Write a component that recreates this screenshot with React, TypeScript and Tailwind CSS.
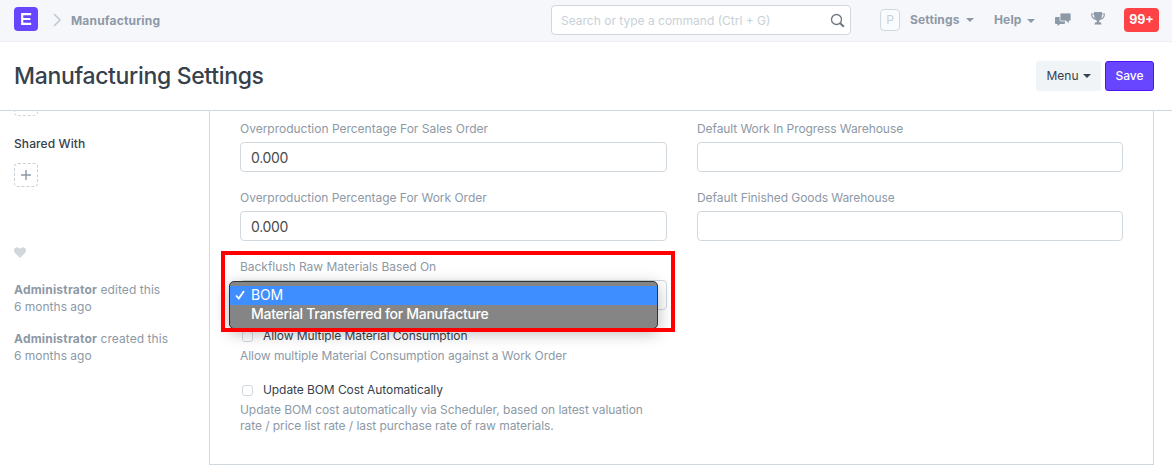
import React from "react";

const label = "text-xs leading-4 text-[#8d99a6] whitespace-nowrap";

function Caret({ className = "" }: { className?: string }) {
  return <span className={`block size-0 border-x-4 border-t-4 border-x-transparent ${className}`} />;
}

function Field({ title, value, spacing }: { title: string; value?: string; spacing: string }) {
  return (
    <div className="h-[69px]">
      <div className={`${label} ${spacing} flex h-[21px] items-start`}>{title}</div>
      <div className="flex h-[30px] items-center rounded-[4px] border border-[#d1d8dd] bg-white px-2.5 text-[14px] tracking-[-0.3px] text-[#4b4b4b]">{value}</div>
    </div>
  );
}

function Check({ title, spacing }: { title: string; spacing: string }) {
  return (
    <div className="flex h-4 items-center">
      <span className="ml-[2px] mt-px size-[11px] rounded-[3px] border border-[#d1d8dd] bg-white" />
      <span className={`ml-[10px] text-xs leading-4 whitespace-nowrap text-[#36414c] ${spacing}`}>{title}</span>
    </div>
  );
}

function Author({ action }: { action: string }) {
  return (
    <div className="h-[49px] text-xs leading-[17px] whitespace-nowrap text-[#8d99a6]">
      <div className="tracking-[0.06px]"><b className="font-bold tracking-[0.2px]">Administrator</b> {action} this</div>
      <div>6 months ago</div>
    </div>
  );
}

export default function App() {
  return (
    <div className="flex h-[475px] w-[1172px] flex-col overflow-hidden bg-white font-['Inter','Liberation_Sans',sans-serif]">
      <header className="flex h-[42px] shrink-0 items-center border-b border-[#ebeff2] bg-[#f5f7fa] pb-px text-xs font-bold text-[#8d99a6]">
        <div className="ml-[14px] flex size-6 -translate-y-px items-center justify-center rounded-[4px] bg-[#6846ff]">
          <svg width="12" height="12" viewBox="0 0 12 12" fill="none" stroke="#fff" strokeWidth="2.2"><path d="M11.200 1.200H2.200v9.600h9M2.200 6h8.200" /></svg>
        </div>
        <svg className="ml-[15px]" width="9" height="14" viewBox="0 0 9 14" fill="none" stroke="#c0cad3" strokeWidth="1.6"><path d="m1 1 6 6-6 6" /></svg>
        <span className="ml-[9px] w-[480px] tracking-[0.18px]"><span className="relative top-px">Manufacturing</span></span>
        <div className="flex h-[30px] w-[300px] shrink-0 items-center justify-between rounded-[4px] border border-[#d1d8dd] bg-white pl-[9px] pr-[5px] font-normal text-[#c8d1d8]">
          <span className="relative top-px">Search or type a command (Ctrl + G)</span>
          <svg width="15" height="15" viewBox="0 0 15 15" fill="none" stroke="#6c7680"><circle cx="6.500" cy="6.500" r="5" strokeWidth="1.3" /><path d="m10.200 10.200 3.600 3.600" strokeWidth="2" /></svg>
        </div>
        <div className="ml-[29px] flex h-[22px] w-5 items-center justify-center rounded-[4px] border border-[#d1d8dd] bg-[#fafbfc] font-normal text-[#c8d1d8]">P</div>
        <span className="ml-[10px] w-[51px] tracking-[0.15px]">Settings</span><Caret className="ml-[5px] border-t-[#8d99a6]" />
        <span className="ml-[20px] w-[28px] tracking-[0.15px]">Help</span><Caret className="ml-[5px] mt-px border-t-[#8d99a6]" />
        <svg className="ml-[20px] -mt-0.5" width="16" height="13" viewBox="0 0 16 13"><path fill="#8d99a6" d="M1 4h8q1 0 1 1v5q0 1-1 1H5l-2.500 2.200V11H1q-1 0-1-1V5q0-1 1-1Z" /><path fill="#8d99a6" stroke="#f5f7fa" strokeWidth="0.8" d="M6 0h9q1 0 1 1v6q0 1-1 1h-1v3l-3-3H6Q5 8 5 7V1q0-1 1-1Z" /></svg>
        <svg className="ml-[20px] -mt-1" width="14" height="13" viewBox="0 0 14 13" fill="#8d99a6"><path d="M3 0h8v1.500h3Q14 7 9 8q-1 .6-1 2 2.500 0 2.500 2v.5h-7V12q0-2 2.500-2 0-1.400-1-2Q0 7 0 1.500h3Zm0 2.500H1q.4 2.800 2.800 3.900Q3 4.500 3 2.500Zm8 0q0 2-.8 3.900Q12.600 5.300 13 2.500Z" /></svg>
        <div className="ml-[19px] flex h-6 w-[35px] items-center justify-center rounded-[4px] bg-[#ff4245] text-[12.5px] text-white">99+</div>
      </header>
      <div className="flex h-[69px] shrink-0 items-center border-b border-[#d1d8dd] pl-[14px] pr-[18px]">
        <h1 className="flex-1 text-[23px] font-medium tracking-[-0.33px] text-[#36414c]">Manufacturing Settings</h1>
        <button className="flex h-[30px] w-[65px] items-center justify-center gap-1 rounded-[3px] bg-[#f0f4f7] text-xs text-[#36414c]">Menu<Caret className="border-t-[#36414c]" /></button>
        <button className="ml-1 h-[30px] w-[49px] rounded-[3px] border border-[#4d12f5] bg-[#6846ff] text-xs font-medium text-white">Save</button>
      </div>
      <main className="flex min-h-0 flex-1">
        <aside className="w-[209px] shrink-0 pl-[14px]">
          <div className="h-[5px] w-6 rounded-b-[4px] border border-t-0 border-dashed border-[#d1d8dd]" />
          <div className="mt-5 text-xs leading-4 font-medium tracking-[0.1px] text-[#36414c]">Shared With</div>
          <div className="mt-[11px] flex size-6 items-center justify-center rounded-[4px] border border-dashed border-[#c8d1d8]">
            <svg width="10" height="10" viewBox="0 0 10 10" fill="none" stroke="#8d99a6" strokeWidth="1.4"><path d="M5 0v10M0 5h10" /></svg>
          </div>
          <svg className="mt-[60px]" width="12" height="11" viewBox="0 0 12 11" fill="#d1d8dd"><path d="M6 11 1 6Q-1 3 1 1q2.500-2 5 .8Q8.500-1 11 1q2 2 0 5Z" /></svg>
          <div className="mt-[23px]"><Author action="edited" /><Author action="created" /></div>
        </aside>
        <section className="relative h-[354px] w-[945px] border-x border-b border-[#d1d8dd] px-[30px] pt-[10px]">
          <div className="flex gap-[30px]">
            <div className="w-[427px]">
              <Field title="Overproduction Percentage For Sales Order" value="0.000" spacing="tracking-[-0.01px]" />
              <Field title="Overproduction Percentage For Work Order" value="0.000" spacing="tracking-[-0.02px]" />
              <Field title="Backflush Raw Materials Based On" spacing="tracking-[-0.03px]" />
              <Check title="Allow Multiple Material Consumption" spacing="tracking-[-0.08px]" />
              <p className={`mt-1 tracking-[-0.065px] ${label}`}>Allow multiple Material Consumption against a Work Order</p>
              <div className="h-[18px]" />
              <Check title="Update BOM Cost Automatically" spacing="tracking-[-0.08px]" />
              <p className={`mt-1 tracking-[-0.055px] ${label}`}>Update BOM cost automatically via Scheduler, based on latest valuation</p>
              <p className={`tracking-[-0.06px] ${label}`}>rate / price list rate / last purchase rate of raw materials.</p>
            </div>
            <div className="w-[426px]">
              <Field title="Default Work In Progress Warehouse" spacing="tracking-[-0.08px]" />
              <Field title="Default Finished Goods Warehouse" spacing="tracking-[-0.06px]" />
            </div>
          </div>
          <div className="absolute left-[19px] top-[170px] h-[48px] w-[429px] rounded-[5px] border border-[#333] bg-[#858585] pt-[4px] text-[14px] text-white shadow-[0_4px_16px_rgba(0,0,0,0.28)]">
            <div className="flex h-[19px] items-center bg-[#3f8eff] pb-0.5">
              <svg className="ml-[5px]" width="10" height="10" viewBox="0 0 10 10" fill="none" stroke="#fff" strokeWidth="1.8"><path d="m1 5.500 2.800 3L9 1" /></svg>
              <span className="ml-[6px] tracking-[-0.2px]">BOM</span>
            </div>
            <div className="flex h-[18px] items-center pb-0.5 pl-[21px] font-medium tracking-[-0.29px]">Material Transferred for Manufacture</div>
          </div>
          <div className="absolute left-[11px] top-[140px] h-[81px] w-[454px] border-4 border-[#f00]" />
        </section>
      </main>
    </div>
  );
}
